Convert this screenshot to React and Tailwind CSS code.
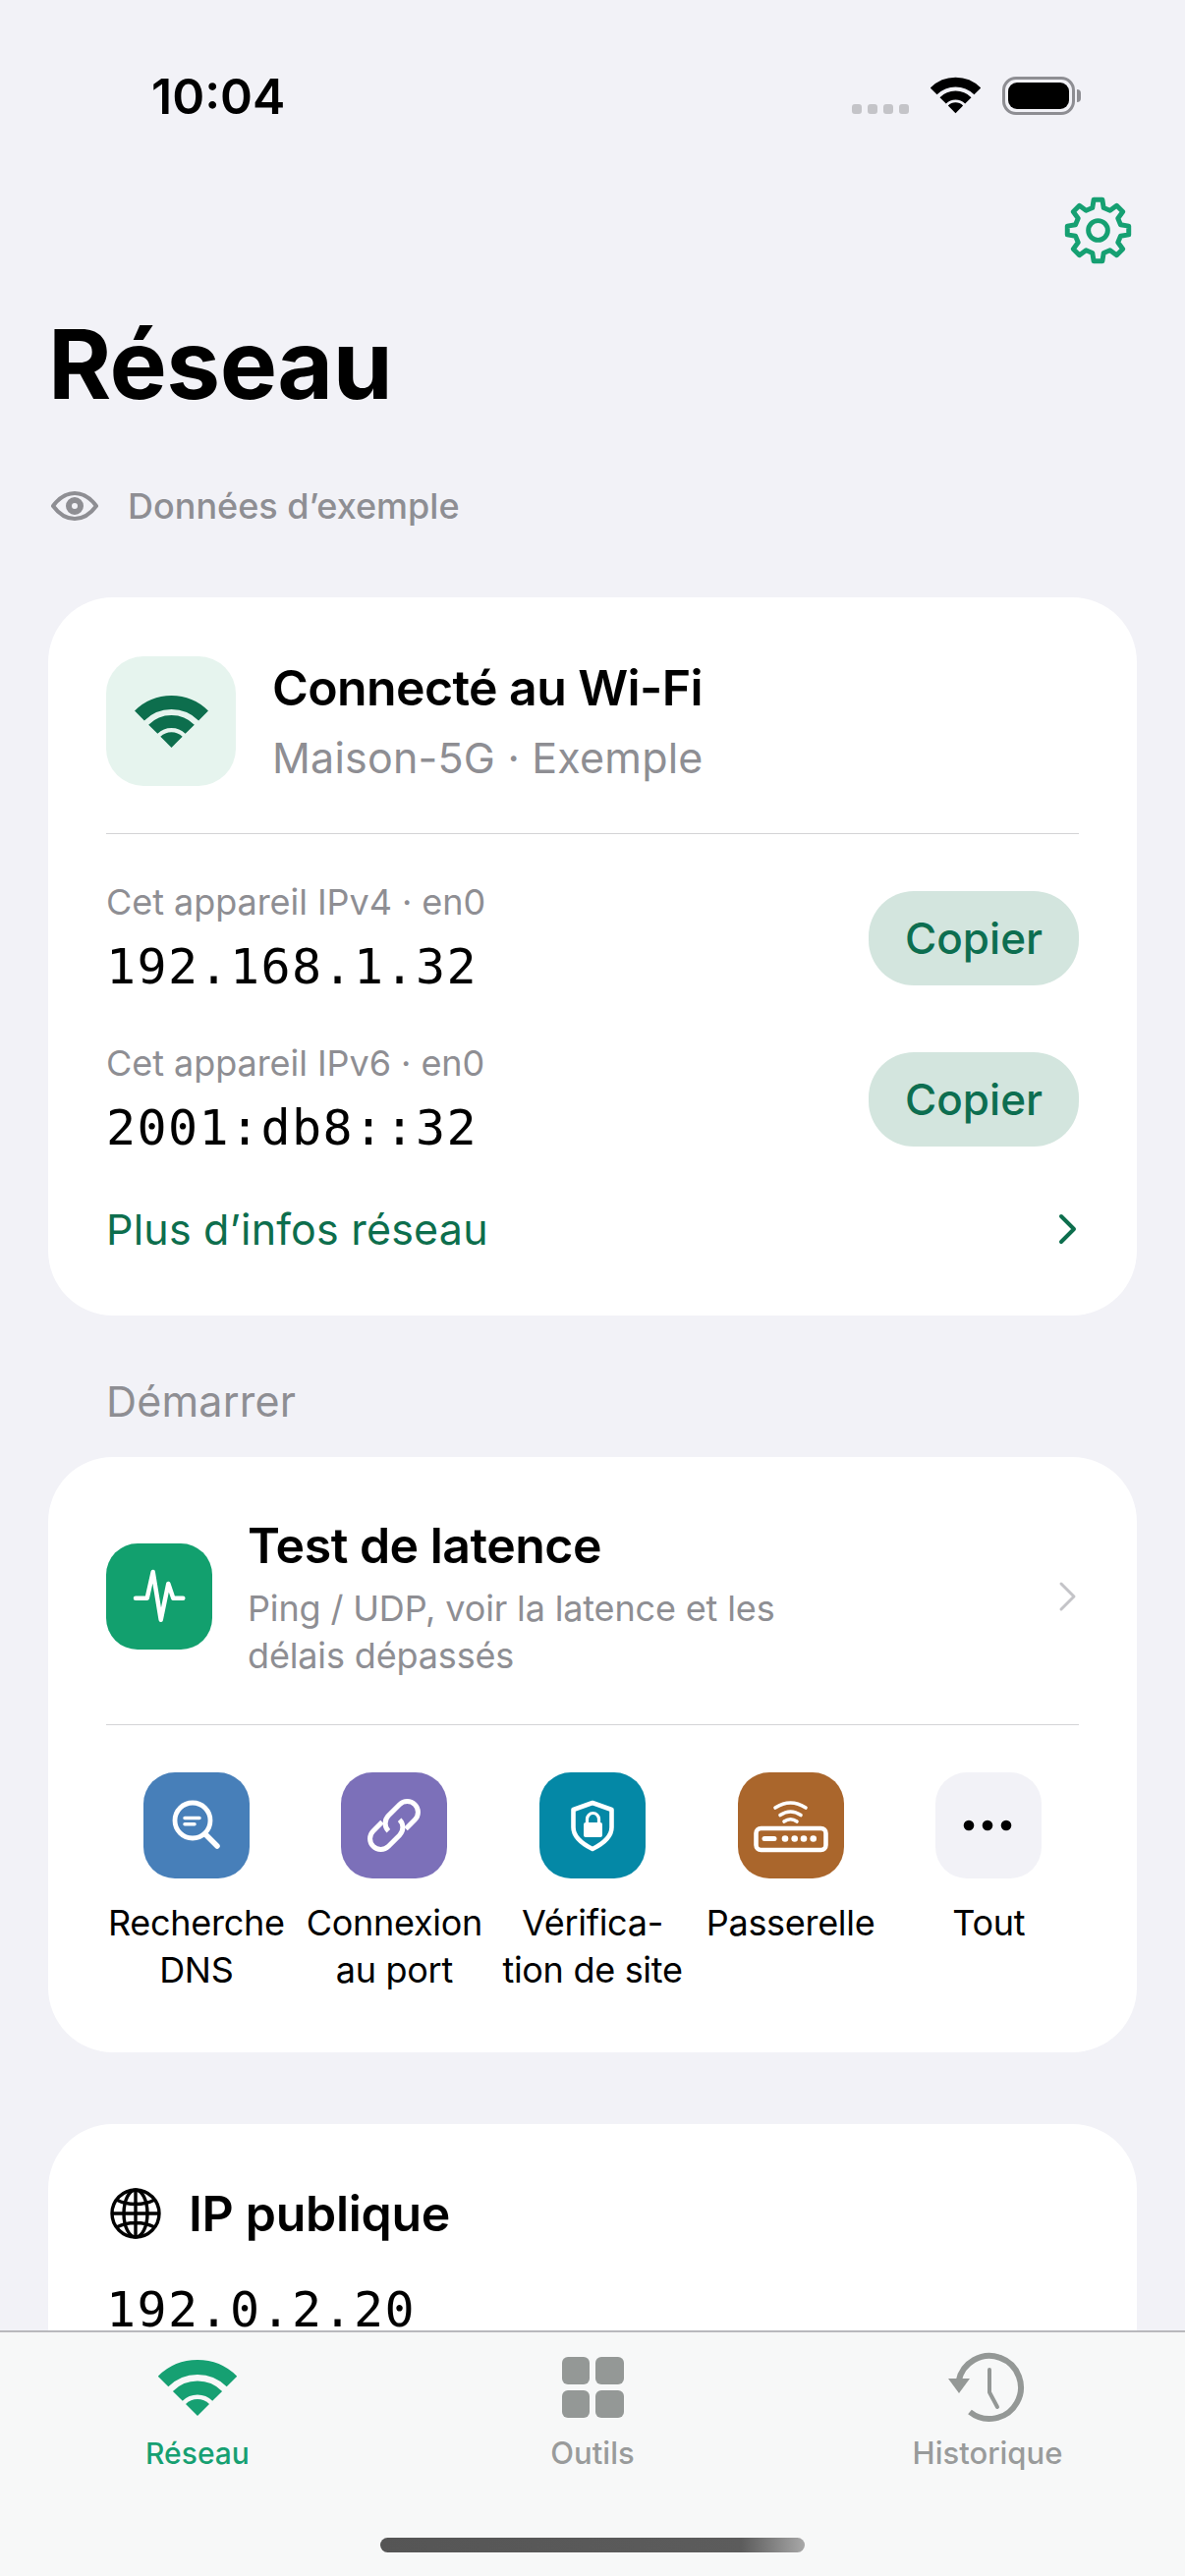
import React from "react";

function Wifi({ className, color }) {
  return (
    <svg viewBox="0 0 80 57" className={className} fill="none" stroke={color}>
      <path d="M5 22A49.5 49.5 0 0 1 75 22" strokeWidth="15" />
      <path d="M19.85 36.85A28.5 28.5 0 0 1 60.15 36.85" strokeWidth="14" />
      <path d="M40 57L28 45A17 17 0 0 1 52 45Z" fill={color} stroke="none" />
    </svg>
  );
}

function gearPath() {
  const pts = [];
  const P = (r, d) => {
    const a = ((d - 90) * Math.PI) / 180;
    return `${(35 + r * Math.cos(a)).toFixed(2)} ${(35 + r * Math.sin(a)).toFixed(2)}`;
  };
  for (let i = 0; i < 8; i++) {
    const a = i * 45;
    pts.push(P(24, a - 14), P(32, a - 8), P(32, a + 8), P(24, a + 14));
  }
  return "M" + pts.join("L") + "Z";
}

function Gear() {
  return (
    <svg viewBox="0 0 70 70" className="w-[69px] h-[69px]" fill="none" stroke="#16a072" strokeWidth="5" strokeLinejoin="round">
      <path d={gearPath()} />
      <circle cx="35" cy="35" r="10" />
    </svg>
  );
}

function Chevron({ className, color, width = 4 }) {
  return (
    <svg viewBox="0 0 20 32" className={className} fill="none" stroke={color} strokeWidth={width} strokeLinecap="round" strokeLinejoin="round">
      <path d="M4 3L17 16L4 29" />
    </svg>
  );
}

function TileSvg({ children, fill = false }) {
  return (
    <svg viewBox="0 0 108 108" className="w-full h-full" fill={fill ? "#fff" : "none"} stroke={fill ? "none" : "#fff"} strokeLinecap="round" strokeLinejoin="round">
      {children}
    </svg>
  );
}

const tools = [
  {
    bg: "bg-[#477fb9]",
    label: ["Recherche", "DNS"],
    icon: (
      <TileSvg>
        <circle cx="50" cy="49" r="18" strokeWidth="4.8" />
        <path d="M63 63L75 75" strokeWidth="5.5" />
        <path d="M42 46.5H57M42 52.7H52" strokeWidth="3.5" />
      </TileSvg>
    ),
  },
  {
    bg: "bg-[#7c70b9]",
    label: ["Connexion", "au port"],
    icon: (
      <TileSvg>
        <g transform="rotate(-45 54 54)" strokeWidth="5" strokeLinecap="butt">
          <path d="M48 43H35A11 11 0 0 0 35 65H51A11 11 0 0 0 62 54" />
          <path d="M60 65H73A11 11 0 0 0 73 43H57A11 11 0 0 0 46 54" />
        </g>
      </TileSvg>
    ),
  },
  {
    bg: "bg-[#0488a6]",
    label: ["Vérifica-", "tion de site"],
    icon: (
      <TileSvg>
        <path d="M54 31L73.5 38V56C73.5 66 64 73 54 78C44 73 34.5 66 34.5 56V38Z" strokeWidth="4.6" />
        <rect x="45" y="51" width="19" height="15" rx="2" fill="#fff" stroke="none" />
        <path d="M48.5 51V47.5A6 6 0 0 1 60.5 47.5V51" strokeWidth="3.2" />
      </TileSvg>
    ),
  },
  {
    bg: "bg-[#aa662c]",
    label: ["Passerelle"],
    icon: (
      <TileSvg>
        <rect x="18.5" y="57" width="71" height="22" rx="5" strokeWidth="4.6" />
        <path d="M27 67.5H37" strokeWidth="5" />
        <g fill="#fff" stroke="none">
          <circle cx="48" cy="67.5" r="3.3" />
          <circle cx="57.7" cy="67.5" r="3.3" />
          <circle cx="67" cy="67.5" r="3.3" />
          <circle cx="76.7" cy="67.5" r="3.3" />
        </g>
        <path d="M38 36Q53.5 26 69 36M43 43.5Q53.5 36.5 64 43.5M47 50Q53.5 45.5 60 50" strokeWidth="3.6" />
      </TileSvg>
    ),
  },
  {
    bg: "bg-[#f2f2f7]",
    label: ["Tout"],
    icon: (
      <svg viewBox="0 0 108 108" className="w-full h-full" fill="#000">
        <circle cx="34" cy="54" r="5.3" />
        <circle cx="53" cy="54" r="5.3" />
        <circle cx="72" cy="54" r="5.3" />
      </svg>
    ),
  },
];

function IpRow({ label, value, className = "" }) {
  return (
    <div className={`flex justify-between items-center h-[96px] ${className}`}>
      <div className="flex flex-col">
        <div className="text-[36px] leading-[42px] tracking-[-0.05px] text-[#8e8e93]">{label}</div>
        <div className="mt-[15px] text-[50px] leading-[60px] tracking-[1.4px] text-black font-['DejaVu_Sans_Mono']">{value}</div>
      </div>
      <div className="w-[214px] h-[96px] rounded-[46px] bg-[#d3e5de] flex items-center justify-center text-[44px] font-medium text-[#0d6e50]">
        Copier
      </div>
    </div>
  );
}

export default function App() {
  return (
    <div className="w-[1206px] h-[2622px] flex flex-col overflow-hidden bg-[#f2f2f7] font-['Inter',sans-serif] text-black">
      <div className="flex-1 min-h-0 overflow-hidden">
        {/* status bar */}
        <div className="flex justify-between items-start pl-[154px] pr-[106px] pt-[68px] h-[200px]">
          <div className="text-[50px] leading-[60px] font-semibold">10:04</div>
          <div className="flex items-start pt-[10px]">
            <div className="flex gap-[6px] mt-[28px]">
              <span className="w-[10px] h-[10px] rounded-[3px] bg-[#c4c4c8]" />
              <span className="w-[10px] h-[10px] rounded-[3px] bg-[#c4c4c8]" />
              <span className="w-[10px] h-[10px] rounded-[3px] bg-[#c4c4c8]" />
              <span className="w-[10px] h-[10px] rounded-[3px] bg-[#c4c4c8]" />
            </div>
            <Wifi className="w-[51px] h-[38px] ml-[22px]" color="#000" />
            <div className="flex items-center ml-[22px]">
              <div className="w-[74px] h-[39px] rounded-[14px] border-[3px] border-[#8e8e93] p-[3px]">
                <div className="w-full h-full rounded-[9px] bg-black" />
              </div>
              <div className="w-[4px] h-[13px] rounded-r-[4px] bg-[#8e8e93] ml-[2px]" />
            </div>
          </div>
        </div>

        {/* gear */}
        <div className="flex justify-end pr-[54px] h-[69px]">
          <Gear />
        </div>

        {/* title */}
        <h1 className="mt-[43px] pl-[49px] text-[98px] leading-[118px] font-bold tracking-[-0.6px]">Réseau</h1>

        <div className="flex items-center mt-[63px] pl-[52px] h-[44px]">
          <svg viewBox="0 0 48 30" className="w-[48px] h-[30px]" fill="none" stroke="#8e8e93">
            <path d="M2 15C9 5.5 16 2 24 2C32 2 39 5.5 46 15C39 24.5 32 28 24 28C16 28 9 24.5 2 15Z" strokeWidth="4" strokeLinejoin="round" />
            <circle cx="24" cy="15" r="6" strokeWidth="6" />
          </svg>
          <span className="ml-[30px] text-[36px] leading-[44px] font-medium text-[#8e8e93]">Données d’exemple</span>
        </div>

        {/* card 1 */}
        <section className="mt-[71px] mx-[49px] rounded-[66px] bg-white px-[59px] pt-[60px] pb-[62px]">
          <div className="flex items-center gap-[37px]">
            <div className="w-[132px] h-[132px] rounded-[38px] bg-[#e6f4ee] flex items-center justify-center">
              <Wifi className="w-[75px] h-[53px]" color="#0d6e4d" />
            </div>
            <div className="flex flex-col">
              <div className="text-[50px] leading-[60px] font-semibold tracking-[-0.6px]">Connecté au Wi-Fi</div>
              <div className="mt-[13px] text-[43px] leading-[56px] tracking-[0.2px] text-[#8e8e93]">Maison-5G · Exemple</div>
            </div>
          </div>
          <div className="mt-[48px] h-[1px] bg-[#d4d4d6]" />
          <IpRow className="mt-[58px]" label="Cet appareil IPv4 · en0" value="192.168.1.32" />
          <IpRow className="mt-[68px]" label="Cet appareil IPv6 · en0" value="2001:db8::32" />
          <div className="mt-[58px] h-[52px] flex items-center justify-between">
            <span className="text-[43px] leading-[52px] tracking-[0.2px] text-[#0d6e4d]">Plus d’infos réseau</span>
            <Chevron className="w-[20px] h-[32px] mr-[2px]" color="#0d6e4d" />
          </div>
        </section>

        <div className="mt-[59px] mb-[29px] pl-[108px] text-[43px] leading-[56px] tracking-[0.2px] text-[#8e8e93]">Démarrer</div>

        {/* card 2 */}
        <section className="mx-[49px] rounded-[66px] bg-white px-[59px] pb-[60px]">
          <div className="h-[272px] pt-[12px] flex items-center gap-[37px]">
            <div className="w-[108px] h-[108px] rounded-[32px] bg-[#12a06e] shrink-0">
              <TileSvg>
                <path d="M30 55.7H41.7L47.7 29L55.7 77.7L63.3 41L68.3 55.7H78.3" strokeWidth="4.5" />
              </TileSvg>
            </div>
            <div className="flex flex-col flex-1 -ml-[1px] pt-[2px]">
              <div className="text-[50px] leading-[60px] font-semibold tracking-[-0.5px]">Test de latence</div>
              <div className="mt-[10px] text-[36px] leading-[48px] tracking-[-0.15px] text-[#8e8e93]">
                Ping / UDP, voir la latence et les
                <br />
                délais dépassés
              </div>
            </div>
            <Chevron className="w-[20px] h-[32px] mr-[2px]" color="#c4c4c8" width={3} />
          </div>
          <div className="h-[1px] bg-[#d4d4d6]" />
          <div className="grid grid-cols-5 -mx-[9px] mt-[48px]">
            {tools.map((t) => (
              <div key={t.label[0]} className="flex flex-col items-center">
                <div className={`w-[108px] h-[108px] rounded-[32px] ${t.bg}`}>{t.icon}</div>
                <div className="mt-[21px] text-[36px] leading-[48px] tracking-[-0.3px] text-center whitespace-nowrap">
                  {t.label.map((l) => (
                    <div key={l}>{l}</div>
                  ))}
                </div>
              </div>
            ))}
          </div>
        </section>

        {/* card 3 */}
        <section className="mt-[73px] mx-[49px] rounded-[66px] bg-white px-[59px] pt-[65px] pb-[200px]">
          <div className="flex items-center gap-[28px] pl-[4px] h-[52px]">
            <svg viewBox="0 0 52 52" className="w-[52px] h-[52px]" fill="none" stroke="#000" strokeWidth="3.4">
              <circle cx="26" cy="26" r="24" />
              <ellipse cx="26" cy="26" rx="12" ry="24" />
              <path d="M26 2V50M2 26H50M6.5 12C18 18 34 18 45.5 12M6.5 40C18 34 34 34 45.5 40" />
            </svg>
            <span className="text-[50px] leading-[60px] font-semibold tracking-[-0.3px]">IP publique</span>
          </div>
          <div className="mt-[50px] text-[50px] leading-[44px] tracking-[1.4px] font-['DejaVu_Sans_Mono']">192.0.2.20</div>
        </section>
      </div>

      {/* tab bar */}
      <nav className="h-[250px] shrink-0 border-t-2 border-[#b9b9bd] bg-[#f7f8f8] flex flex-col">
        <div className="grid grid-cols-3 pt-[20px]">
          <div className="flex flex-col items-center">
            <div className="h-[72px] flex items-center justify-center">
              <Wifi className="w-[80px] h-[57px]" color="#16a072" />
            </div>
            <div className="mt-[11px] text-[30px] leading-[40px] font-medium text-[#16a072]">Réseau</div>
          </div>
          <div className="flex flex-col items-center">
            <div className="h-[72px] flex items-center justify-center">
              <div className="grid grid-cols-2 gap-[6px] w-[63px]">
                <span className="h-[28px] rounded-[6px] bg-[#949896]" />
                <span className="h-[28px] rounded-[6px] bg-[#949896]" />
                <span className="h-[28px] rounded-[6px] bg-[#949896]" />
                <span className="h-[28px] rounded-[6px] bg-[#949896]" />
              </div>
            </div>
            <div className="mt-[11px] text-[31px] leading-[40px] font-medium text-[#999b9b]">Outils</div>
          </div>
          <div className="flex flex-col items-center">
            <div className="h-[72px] flex items-center justify-center">
              <svg viewBox="0 0 80 72" className="w-[80px] h-[72px]" fill="none" stroke="#949896">
                <path d="M10.5 30A32 32 0 1 1 22 61" strokeWidth="6" />
                <path d="M0 27H22L11 42Z" fill="#949896" stroke="none" />
                <path d="M42 18V41L50 56" strokeWidth="4" strokeLinecap="round" strokeLinejoin="round" />
              </svg>
            </div>
            <div className="mt-[11px] text-[31px] leading-[40px] font-medium text-[#999b9b]">Historique</div>
          </div>
        </div>
        <div className="mt-[66px] mx-auto w-[432px] h-[15px] rounded-[8px] bg-gradient-to-r from-[#555555] via-[#5c5c5c] via-85% to-[#a8a8a8]" />
      </nav>
    </div>
  );
}
